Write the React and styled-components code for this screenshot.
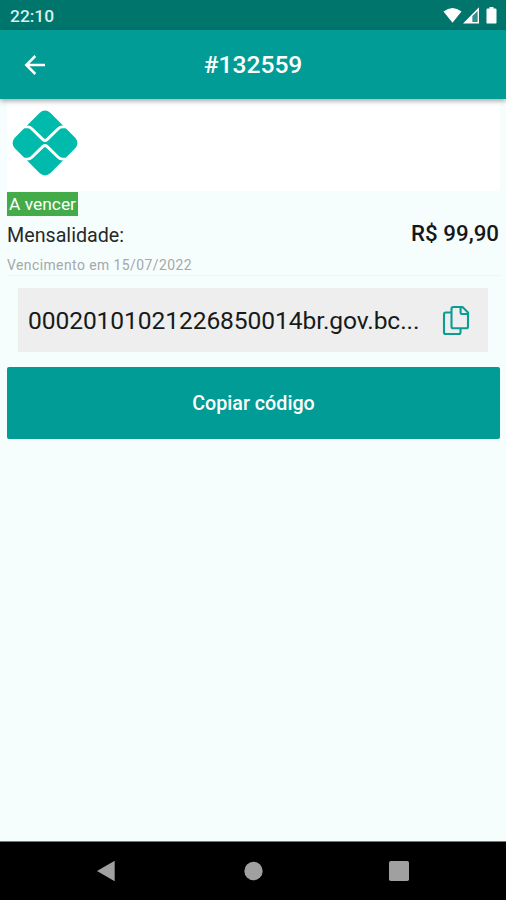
import React from "react";
import styled, { createGlobalStyle } from "styled-components";

const GlobalStyle = createGlobalStyle`
  * {
    box-sizing: border-box;
  }
  body {
    margin: 0;
    font-family: Roboto, "Liberation Sans", sans-serif;
    background: #f6fdfd;
  }
`;

// STYLED COMPONENTS

const Screen = styled.div`
  display: flex;
  flex-direction: column;
  width: 506px;
  height: 900px;
  overflow: hidden;
  background: #f6fdfd;
`;

const StatusBar = styled.div`
  display: flex;
  flex: none;
  align-items: center;
  justify-content: space-between;
  height: 30px;
  padding: 2px 7px 0 10px;
  background: #00756c;
  color: #dcefed;
  font-size: 17.4px;
  font-weight: 500;
`;

const AppBar = styled.header`
  display: grid;
  flex: none;
  grid-template-columns: 70px 1fr 70px;
  align-items: center;
  height: 69px;
  background: #009c95;
  color: #fff;
  box-shadow: 0 2px 5px rgba(0, 0, 0, 0.35);
  z-index: 1;
`;

const BackButton = styled.button`
  display: flex;
  justify-content: center;
  padding: 0;
  border: 0;
  background: none;
  color: inherit;
`;

const Title = styled.h1`
  margin: 0;
  font-size: 24.6px;
  font-weight: 500;
  line-height: 30px;
  text-align: center;
`;

const Content = styled.main`
  display: flex;
  flex: 1;
  flex-direction: column;
  padding: 0 6px 0 7px;
`;

const LogoPanel = styled.div`
  height: 92px;
  padding: 11px 0 0 5px;
  background: #fff;
`;

const Invoice = styled.section`
  display: flex;
  justify-content: space-between;
  height: 85px;
  padding: 1px 1px 0 0;
  border-bottom: 1px solid #eef5f5;
`;

const InvoiceInfo = styled.div`
  display: flex;
  flex-direction: column;
  align-items: flex-start;
`;

const Badge = styled.span`
  height: 24px;
  padding: 0 2px;
  background: #43ab47;
  color: #fff;
  font-size: 17.4px;
  line-height: 24px;
  white-space: nowrap;
`;

const Label = styled.span`
  margin-top: 8px;
  color: #262929;
  font-size: 19.7px;
  line-height: 24px;
`;

const DueDate = styled.span`
  margin-top: 9px;
  color: #a3a8a8;
  font-size: 13.9px;
  line-height: 16px;
  letter-spacing: 0.45px;
`;

const Price = styled.strong`
  margin-top: 28px;
  color: #151818;
  font-size: 22.3px;
  font-weight: 500;
  line-height: 26px;
`;

const CodeBox = styled.div`
  display: flex;
  align-items: center;
  height: 64px;
  margin: 12px 12px 15px 11px;
  padding: 1px 17px 0 10px;
  background: #eee;
`;

const Code = styled.span`
  flex: none;
  width: 414px;
  overflow: hidden;
  color: #181a1a;
  font-size: 24.6px;
  line-height: 32px;
  letter-spacing: -0.1px;
  white-space: nowrap;
`;

const CopyButton = styled.button`
  display: flex;
  flex: none;
  padding: 0;
  border: 0;
  background: none;
`;

const SubmitButton = styled.button`
  height: 72px;
  padding: 0;
  border: 0;
  border-radius: 2px;
  background: #009c95;
  color: #fff;
  font-family: inherit;
  font-size: 19.7px;
  font-weight: 500;
`;

const NavBar = styled.nav`
  display: flex;
  flex: none;
  align-items: center;
  justify-content: space-between;
  height: 59px;
  padding: 0 97px 0 96px;
  border-top: 1px solid #777;
  background: #000;
`;

// ICONS

const StatusIcons = () => (
  <svg width="56" height="20" viewBox="0 0 56 20" fill="#fff">
    <path d="M0.5 5.6 Q9.5 -1.5 18.5 5.6 L9.5 16.8 Z" />
    <path
      fillRule="evenodd"
      d="M20 17.6 L36 1.2 V17.6 Z M29.4 10 V16.1 H34.6 V4.9 Z"
    />
    <path d="M29.4 10 L34.6 4.9 V16.1 H29.4 Z" fillOpacity="0.2" />
    <path d="M46.5 1 h4 v1.6 h1.8 q1.2 0 1.2 1.2 v12.6 q0 1.2 -1.2 1.2 h-7.6 q-1.2 0 -1.2 -1.2 V3.8 q0 -1.2 1.2 -1.2 h1.8 Z" />
  </svg>
);

const ArrowIcon = () => (
  <svg width="22" height="22" viewBox="0 0 22 22">
    <path
      d="M11.3 2 L2.3 11 L11.3 20 M2.3 11 H21"
      fill="none"
      stroke="#fff"
      strokeWidth="2.5"
    />
  </svg>
);

const PixLogo = () => (
  <svg width="66" height="66" viewBox="0 0 66 66">
    <path
      fill="#00bbab"
      d="M27.5 3 Q33 -1.9 38.5 3 L63 27.5 Q67.9 33 63 38.5 L38.5 63 Q33 67.9 27.5 63 L3 38.5 Q-1.9 33 3 27.5 Z"
    />
    <g fill="none" stroke="#fff" strokeWidth="2.9">
      <path d="M8 16.9 H15.5 Q18 16.9 19.8 18.7 L31 29.6 Q33 31.5 35 29.6 L46.2 18.7 Q48 16.9 50.5 16.9 H58" />
      <path d="M8 49.1 H15.5 Q18 49.1 19.8 47.3 L31 36.4 Q33 34.5 35 36.4 L46.2 47.3 Q48 49.1 50.5 49.1 H58" />
    </g>
  </svg>
);

const CopyIcon = () => (
  <svg
    width="28"
    height="32"
    viewBox="0 0 28 32"
    fill="none"
    stroke="#0b9c93"
    strokeWidth="2.1"
    strokeLinejoin="round"
  >
    <path d="M11.3 2 H20.5 L26 7.5 V21.5 Q26 23.3 24.2 23.3 H11.3 Q9.5 23.3 9.5 21.5 V3.8 Q9.5 2 11.3 2 Z" />
    <path d="M18.6 2.5 V7.7 Q18.6 9 19.9 9 H25.5" />
    <path d="M9 7.5 H3.8 Q2 7.5 2 9.3 V27.2 Q2 29 3.8 29 H16.7 Q18.5 29 18.5 27.2 V24" />
  </svg>
);

const NavBack = () => (
  <svg width="20" height="22" viewBox="0 0 20 22">
    <path d="M1 11 L18.7 0.8 V21.2 Z" fill="#a0a0a0" />
  </svg>
);

const NavHome = () => (
  <svg width="20" height="20" viewBox="0 0 20 20">
    <circle cx="10.5" cy="10" r="9.2" fill="#a0a0a0" />
  </svg>
);

const NavRecent = () => (
  <svg width="20" height="20" viewBox="0 0 20 20">
    <rect width="20" height="20" rx="1.8" fill="#a0a0a0" />
  </svg>
);

function App() {
  return (
    <>
      <GlobalStyle />
      <Screen>
        <StatusBar>
          <span>22:10</span>
          <StatusIcons />
        </StatusBar>
        <AppBar>
          <BackButton aria-label="Voltar">
            <ArrowIcon />
          </BackButton>
          <Title>#132559</Title>
        </AppBar>
        <Content>
          <LogoPanel>
            <PixLogo />
          </LogoPanel>
          <Invoice>
            <InvoiceInfo>
              <Badge>A vencer</Badge>
              <Label>Mensalidade:</Label>
              <DueDate>Vencimento em 15/07/2022</DueDate>
            </InvoiceInfo>
            <Price>R$ 99,90</Price>
          </Invoice>
          <CodeBox>
            <Code>00020101021226850014br.gov.bc...</Code>
            <CopyButton aria-label="Copiar">
              <CopyIcon />
            </CopyButton>
          </CodeBox>
          <SubmitButton>Copiar código</SubmitButton>
        </Content>
        <NavBar>
          <NavBack />
          <NavHome />
          <NavRecent />
        </NavBar>
      </Screen>
    </>
  );
}

export default App;
